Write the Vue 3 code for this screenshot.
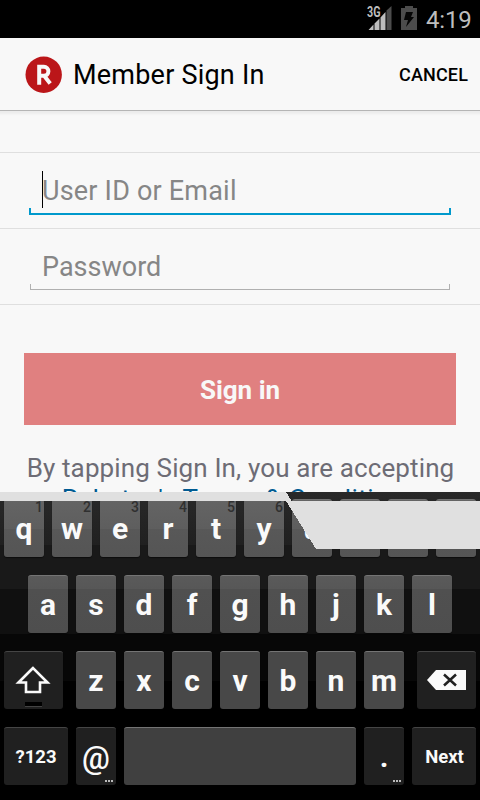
<script setup>
const topRow = 'qwertyuiop'.split('').map((k, i) => ({ k, n: (i + 1) % 10 }))
const homeRow = 'asdfghjkl'.split('')
const bottomRow = 'zxcvbnm'.split('')
</script>

<template>
  <main class="screen">
    <div class="status">
      <svg class="signal" width="26" height="26" viewBox="0 0 26 26">
        <path d="M20.500 4.500L25.500 0v24h-5z" fill="#4c4c4c" />
        <path d="M2.500 24l5-5.500V24zM8.500 17.500l5-5V24h-5zM14.500 11.500l5-5.500v18h-5z" fill="#bebebe" />
        <text x="1" y="11" textLength="13.500" lengthAdjust="spacingAndGlyphs">3G</text>
      </svg>
      <svg class="battery" width="16" height="24" viewBox="0 0 16 24">
        <path d="M4 0h8v2h4v22H0V2h4z" fill="#4c4c4c" />
        <path d="M5 6h7l-2 5h3L5 21l2-7H3z" fill="#050505" />
      </svg>
      <span class="clock">4:19</span>
    </div>
    <header class="bar">
      <svg class="logo" width="38" height="38" viewBox="0 0 38 38">
        <circle cx="18.700" cy="18.700" r="18.200" fill="#bb1619" />
        <path d="M14.200 28.700V10.800h4.700a4.500 4.500 0 0 1 0 9H14M19.500 20.200L25.200 27.500" fill="none" stroke="#f8f8f8" stroke-width="4" />
      </svg>
      <h1>Member Sign In</h1>
      <button class="cancel">CANCEL</button>
    </header>
    <section class="form">
      <div class="row">
        <div class="field focused"><i class="caret"></i><span class="user">User ID or Email</span></div>
      </div>
      <div class="row">
        <div class="field"><span class="pass">Password</span></div>
      </div>
    </section>
    <button class="signin"><span>Sign in</span></button>
    <p class="terms">
      <span class="l1">By tapping Sign In, you are accepting</span>
      <a class="l2">Rakuten's Terms &amp; Conditions</a>
    </p>
    <section class="keyboard">
      <div class="keys">
        <div v-for="t in topRow" :key="t.k" class="key top"><small>{{ t.n }}</small><b>{{ t.k }}</b></div>
      </div>
      <div class="keys">
        <div v-for="k in homeRow" :key="k" class="key home"><b>{{ k }}</b></div>
      </div>
      <div class="keys spread">
        <div class="key fn wide">
          <svg width="59" height="58" viewBox="0 0 59 58">
            <path d="M29 17L14.500 31.500H22V41h14v-9.500h7.500z" fill="none" stroke="#fafafa" stroke-width="2.600" />
            <path d="M21 51h17v4H21z" fill="#000" /><path d="M21 55h17v1H21z" fill="#444" />
          </svg>
        </div>
        <div class="letters">
          <div v-for="k in bottomRow" :key="k" class="key low"><b>{{ k }}</b></div>
        </div>
        <div class="key fn wide">
          <svg width="59" height="58" viewBox="0 0 59 58">
            <path d="M10 29l9-10h30v20H19z" fill="#fafafa" />
            <path d="M27 23.500l12 11M39 23.500l-12 11" stroke="#202020" stroke-width="2.500" />
          </svg>
        </div>
      </div>
      <div class="keys">
        <div class="key fn edge"><span class="label">?123</span></div>
        <div class="key fn"><span class="at">@</span><i class="dots"></i></div>
        <div class="key space"></div>
        <div class="key fn"><b class="dot">.</b><i class="dots"></i></div>
        <div class="key fn edge"><span class="label next">Next</span></div>
      </div>
      <svg class="trail" width="480" height="57" viewBox="0 0 480 57" shape-rendering="crispEdges">
        <path d="M0 0h286l5.500 9H480v48H316L286 9H0z" fill="#e0e0e0" />
      </svg>
    </section>
  </main>
</template>

<style>
body { margin: 0; overflow: hidden; }
</style>

<style scoped>
* { box-sizing: border-box; }
.screen { width: 480px; height: 800px; overflow: hidden; background: #f8f8f8; font-family: Roboto, sans-serif; display: flex; flex-direction: column; }
button { border: 0; margin: 0; padding: 0; background: none; font-family: inherit; }
.status { height: 38px; flex: none; background: #000; display: flex; justify-content: flex-end; padding-right: 9px; }
.signal { margin: 6px 9px 0 0; overflow: visible; }
.signal text { font: bold 14px Roboto, sans-serif; fill: #bebebe; }
.battery { margin: 6px 9px 0 0; }
.clock { font-size: 24px; line-height: 40px; width: 45px; letter-spacing: -0.2px; color: #bebebe; white-space: nowrap; }
.bar { height: 72px; flex: none; display: flex; align-items: center; padding: 0 12px 0 25px; box-shadow: 0 1px 0 #b5b5b5, 0 2px 2px 2px #ececec; clip-path: inset(0 0 -6px 0); }
.logo { margin-top: 2px; }
h1 { margin: 1px 0 0 10px; font-size: 27px; font-weight: 400; letter-spacing: 0.22px; color: #000; white-space: nowrap; flex: 1; }
.cancel { font-size: 18px; font-weight: 500; letter-spacing: 0.15px; color: #000; }
.form { margin-top: 42px; flex: none; border-top: 1px solid #dfdfdf; }
.row { height: 76px; border-bottom: 1px solid #dfdfdf; padding: 15px 30px 0; }
.field { height: 46px; padding-left: 12px; position: relative; font-size: 27px; line-height: 47px; color: #868686; white-space: nowrap;
  background: linear-gradient(#b0b0b0, #b0b0b0) left bottom / 1px 6px no-repeat, linear-gradient(#b0b0b0, #b0b0b0) right bottom / 1px 6px no-repeat, linear-gradient(#b0b0b0, #b0b0b0) bottom / 100% 1px no-repeat; }
.field.focused { height: 47px; margin: 0 -1px; padding-left: 13px;
  background: linear-gradient(#0099cc, #0099cc) left bottom / 2px 7px no-repeat, linear-gradient(#0099cc, #0099cc) right bottom / 2px 7px no-repeat, linear-gradient(#0099cc, #0099cc) bottom / 100% 2px no-repeat; }
.user { letter-spacing: 0.2px; }
.caret { position: absolute; left: 13px; top: 3px; width: 1px; height: 37px; background: #000; }
.signin { flex: none; margin: 48px 24px 0; height: 72px; background: #e08080; color: #f8f8f8; font-size: 26px; font-weight: 700; padding-top: 2px; }
.terms { margin: 28px 0 0; height: 39px; flex: none; overflow: hidden; display: flex; flex-direction: column; align-items: center; font-size: 26px; letter-spacing: 0.13px; line-height: 31px; color: #6d6c75; white-space: nowrap; }
.l1 { padding-left: 1px; }
.terms a { color: #005b92; letter-spacing: 0.5px; }
.keyboard { height: 308px; flex: none; position: relative; padding: 7px 4px 0; display: flex; flex-direction: column; gap: 18px;
  background: linear-gradient(#292929 0, #202020 53px, #191919 53px, #191919 97px, #101010 97px, #101010 142px, #070707 142px, #070707 189px, #000 189px); }
.keys { display: flex; justify-content: center; gap: 8px; }
.spread { justify-content: space-between; }
.letters { display: flex; gap: 8px; }
.key { width: 40px; height: 58px; flex: none; border-radius: 3px; display: flex; justify-content: center; position: relative; color: #fafafa; border-top: 1px solid #747474; box-shadow: 0 1px 1px #0008; }
.key b { font-size: 30px; line-height: 30px; margin-top: 14px; font-weight: 700; }
.top { background: linear-gradient(#646464 0, #5e5e5e 29px, #585858 29px, #555 100%); }
.top small { position: absolute; right: 1px; top: 0; font-size: 14px; line-height: 14px; font-weight: 500; color: #303030; }
.home { background: linear-gradient(#5a5a5a 0, #575757 13px, #505050 13px, #4e4e4e 100%); }
.low { background: #484848; }
.space { width: 232px; background: #404040; }
.fn { background: #202020; border-top-color: #454545; }
.wide { width: 59px; }
.wide svg { margin-top: -1px; }
.edge { width: 64px; }
.label { font-size: 18.5px; font-weight: 700; line-height: 58px; }
.next { padding-left: 1px; }
.at { font-size: 31px; font-weight: 500; line-height: 62px; }
.dots { position: absolute; right: 3px; bottom: 3px; width: 8px; height: 2px; background: repeating-linear-gradient(90deg, #bbb 0 2px, transparent 2px 3px); }
.trail { position: absolute; left: 0; top: 0; }
</style>
